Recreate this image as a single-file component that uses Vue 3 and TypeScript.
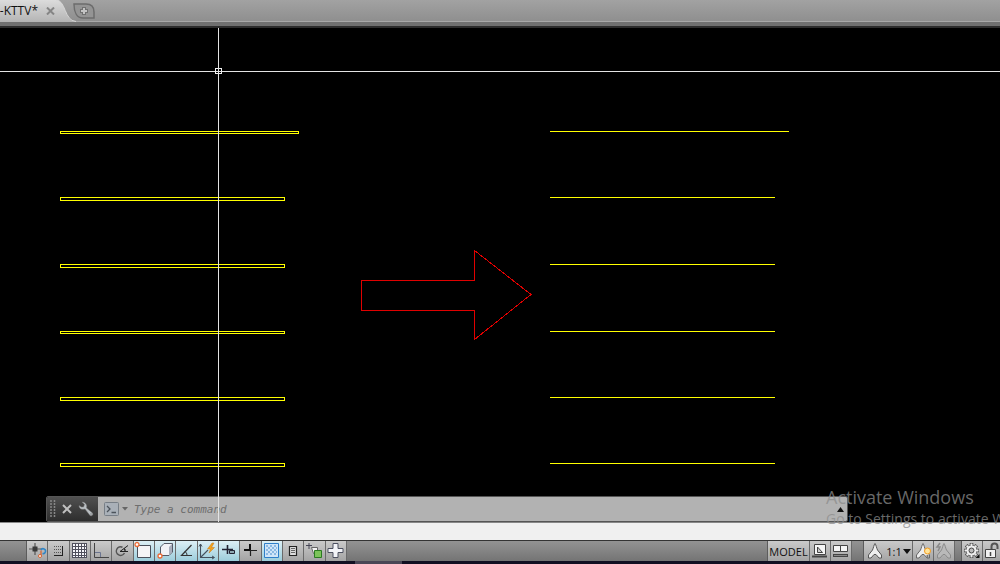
<script setup lang="ts">
import { ref } from 'vue'

interface Shape {
  d: string
  fill?: string
  stroke?: string
  w?: number
}
interface Tool {
  name: string
  on?: boolean
  shapes: Shape[]
}

const command = ref('')

const bars = [
  { y: 131, h: 2, w: 238 },
  { y: 197, h: 3, w: 224 },
  { y: 264, h: 3, w: 224 },
  { y: 331, h: 2, w: 224 },
  { y: 397, h: 3, w: 224 },
  { y: 463, h: 3, w: 224 },
]
const lines = [
  { y: 131, w: 239 },
  { y: 197, w: 225 },
  { y: 264, w: 225 },
  { y: 331, w: 225 },
  { y: 397, w: 225 },
  { y: 463, w: 225 },
]

const tools: Tool[] = [
  {
    name: 'Infer constraints',
    shapes: [
      { d: 'M2 8H15M8 2V14', stroke: '#555', w: 1.2 },
      { d: 'M5.500 5.500h5v5h-5z', fill: '#3a3a3a' },
      { d: 'M14 9a2.400 2.400 0 1 1 1.500 3.500', stroke: '#2f86c8', w: 1.6 },
      { d: 'M14 9.500V15', stroke: '#d8602a', w: 1.2 },
      { d: 'M11.500 15a1.500 1.500 0 1 0 3 0a1.500 1.500 0 1 0-3 0', stroke: '#d8602a', fill: '#fff' },
    ],
  },
  {
    name: 'Snap mode',
    shapes: [
      { d: 'M6 5.500h1m1 0h1m1 0h1m1 0h1M6 8.500h1m1 0h1m1 0h1m1 0h1M6 11.500h1m1 0h1m1 0h1m1 0h1', stroke: '#555' },
      { d: 'M14.500 5v9M6 14.500h9', stroke: '#222' },
    ],
  },
  {
    name: 'Grid display',
    shapes: [
      { d: 'M3 2h15v15H3z', fill: '#f6f6fa' },
      { d: 'M3.500 2v15M6.500 2v15M9.500 2v15M12.500 2v15M15.500 2v15M17.500 2v15M3 2.500h15M3 5.500h15M3 8.500h15M3 11.500h15M3 14.500h15M3 16.500h15', stroke: '#50505c' },
    ],
  },
  {
    name: 'Ortho mode',
    shapes: [
      { d: 'M4 11.500H9.500V16', stroke: '#6b7590' },
      { d: 'M3.500 2V16.500H18', stroke: '#444' },
    ],
  },
  {
    name: 'Polar tracking',
    shapes: [
      { d: 'M10.500 6.200A4.300 4.300 0 1 0 12.500 12', stroke: '#555', w: 1.5 },
      { d: 'M8 10.500L16 4.500M8 10.500H16', stroke: '#222' },
      { d: 'M12 7.500Q13.500 8.500 13 10.500', stroke: '#222', w: 1.4 },
    ],
  },
  {
    name: 'Object snap',
    on: true,
    shapes: [
      { d: 'M4.500 4.500h13v12h-13z', fill: '#f4f4f6', stroke: '#4a4f5a' },
      { d: 'M2 3.500a2 2 0 1 0 4 0a2 2 0 1 0-4 0', fill: '#fff', stroke: '#ee6b35', w: 1.3 },
    ],
  },
  {
    name: '3D object snap',
    on: true,
    shapes: [
      { d: 'M5.500 6L9 2.500H17.500V11L14 14.500H5.500z', fill: '#f1f2f6', stroke: '#555b68' },
      { d: 'M14 6L17 3V11L14 14z', fill: '#a9afbd' },
      { d: 'M3 15a2 2 0 1 0 4 0a2 2 0 1 0-4 0', fill: '#fff', stroke: '#ee6b35', w: 1.3 },
    ],
  },
  {
    name: 'Object snap tracking',
    on: true,
    shapes: [
      { d: 'M15.500 4L5.500 14.500H16', stroke: '#333', w: 1.2 },
      { d: 'M9 10.500Q11 12 11 14', stroke: '#333' },
    ],
  },
  {
    name: 'Dynamic UCS',
    on: true,
    shapes: [
      { d: 'M3.500 3V16.500H17M3.500 16.500L11 9', stroke: '#44505c', w: 1.1 },
      { d: 'M2 5.500L3.500 3L5 5.500M15 15L17.500 16.500L15 18', stroke: '#44505c' },
      { d: 'M15 2L10.500 8H13.500L12 12L17.500 6.500H14.500L17 2z', fill: '#f4a21c', stroke: '#c77a18', w: 0.5 },
    ],
  },
  {
    name: 'Dynamic input',
    on: true,
    shapes: [
      { d: 'M3 8.500H14M8.500 4V13', stroke: '#223', w: 1.6 },
      { d: 'M10.500 9.500h5v3h-5z', fill: '#8fa8b2', stroke: '#223' },
    ],
  },
  {
    name: 'Line weight',
    shapes: [
      { d: 'M4 9H11M10 3V9', stroke: '#111', w: 2 },
      { d: 'M10.500 9V15M10 9.500H17', stroke: '#222', w: 1.2 },
    ],
  },
  {
    name: 'Transparency',
    on: true,
    shapes: [
      { d: 'M3.500 2.500h14v14h-14z', fill: '#cfe5f8', stroke: '#2e7fc9' },
      { d: 'M5 5h2m2 0h2m2 0h2M7 7h2m2 0h2m2 0h1M5 9h2m2 0h2m2 0h2M7 11h2m2 0h2m2 0h1M5 13h2m2 0h2m2 0h2', stroke: '#76aadb', w: 1.6 },
    ],
  },
  {
    name: 'Quick properties',
    shapes: [
      { d: 'M6.500 5.500h7v9h-7z', fill: '#ddd', stroke: '#222', w: 1.2 },
      { d: 'M8 7.500h4M8 9.500h4M8 11.500h4', stroke: '#666' },
    ],
  },
  {
    name: 'Selection cycling',
    shapes: [
      { d: 'M2 4.500H8M5 2V8', stroke: '#445' },
      { d: 'M7.500 6.500H13.500V12.500H9.500z', fill: '#f4f4f4', stroke: '#666' },
      { d: 'M10.500 9.500h7v7h-7z', fill: '#7cc45a', stroke: '#2c7a22' },
    ],
  },
  {
    name: 'Annotation monitor',
    shapes: [
      { d: 'M8 2.500h5v5h5v4h-5v5h-5v-5h-5v-4h5z', fill: '#f3f4f8', stroke: '#4c5060' },
    ],
  },
]

const annot = 'M10 2.500C8.800 4 8.500 7 7.500 9L3.500 14V17H6L9 13.500H11L14 17H16.500V14L12.500 9C11.500 7 11.200 4 10 2.500z'
const teeth = [0, 45, 90, 135, 180, 225, 270, 315]
</script>

<template>
  <div class="app">
    <header class="tabs">
      <div class="strip">
        <svg class="tab-shape" viewBox="0 0 76 22" aria-hidden="true">
          <defs>
            <linearGradient id="tabFill" x1="0" y1="0" x2="0" y2="1">
              <stop offset="0" stop-color="#dcdcdc" />
              <stop offset="1" stop-color="#b4b4b4" />
            </linearGradient>
          </defs>
          <path d="M0 0H56C66 0 64 21 76 22H0z" fill="url(#tabFill)" />
          <path d="M56 0C66 0 64 21 76 21.500" fill="none" stroke="#d8d8d8" />
        </svg>
        <div class="tab">
          <span class="tab-name">3-KTTV*</span>
          <button class="plain close" aria-label="Close drawing">
            <svg width="9" height="8" viewBox="0 0 9 8"><path d="M1 .5L8 7.500M8 .5L1 7.500" stroke="#858585" stroke-width="2" /></svg>
          </button>
        </div>
        <button class="plain new" aria-label="New drawing">
          <svg width="22" height="16" viewBox="0 0 22 16">
            <path d="M1 1H13C18 1 21 4 21 9V15H10C4 15 1 9 1 1z" fill="#949494" stroke="#6c6c6c" stroke-width="1.500" />
            <path d="M7 8H15M11 4V12" stroke="#707070" stroke-width="4" />
            <path d="M8 8H14M11 5V11" stroke="#c4c4c4" stroke-width="2" />
          </svg>
        </button>
      </div>
    </header>

    <main class="canvas">
      <svg class="drawing" aria-label="Drawing area">
        <g transform="translate(0 -28)" fill="none" shape-rendering="crispEdges">
          <g stroke="#ffff00">
            <rect v-for="b in bars" :key="b.y" x="60.500" :y="b.y + 0.5" :width="b.w" :height="b.h" />
            <line v-for="l in lines" :key="l.y" x1="550" :x2="550 + l.w" :y1="l.y + 0.5" :y2="l.y + 0.5" />
          </g>
          <path d="M361.500 280.500H474.500V250.500L531 294.500L474.500 339.500V310.500H361.500z" stroke="#e00000" />
          <path d="M218.500 0V550" stroke="#e4e4e4" />
          <line x1="0" x2="100%" y1="71" y2="71" stroke="#e4e4e4" />
          <rect x="215.500" y="68.500" width="6" height="5" stroke="#f0f0f0" />
        </g>
      </svg>

      <form class="cmd" @submit.prevent>
        <div class="cmd-grip">
          <svg width="6" height="18" viewBox="0 0 6 18" aria-hidden="true">
            <path d="M1 0V18M4.500 0V18" stroke="#888" stroke-width="1.500" stroke-dasharray="2 1" />
          </svg>
          <button type="button" class="plain" aria-label="Close">
            <svg width="10" height="10" viewBox="0 0 10 10"><path d="M1 1L9 9M9 1L1 9" stroke="#c0c0c0" stroke-width="2" /></svg>
          </button>
          <button type="button" class="plain" aria-label="Customize">
            <svg width="16" height="16" viewBox="0 0 16 16">
              <path d="M4 1L6.500 3.500L5.500 6L3.500 6L1 4.500C1 8 4 9 7 8L12 14.500C14 15.500 15.500 13.500 14.500 12L8.500 7C9.500 3.500 7 1 4 1z" fill="#b9bec2" stroke="#777" stroke-width=".5" />
              <path d="M12.500 12.500h1v1h-1z" fill="#555" />
            </svg>
          </button>
        </div>
        <div class="cmd-field">
          <button type="button" class="plain recent" aria-label="Recent commands">
            <svg width="24" height="14" viewBox="0 0 24 14">
              <rect x=".5" y=".5" width="14" height="13" rx="1" fill="#a9b0b8" stroke="#777e86" />
              <path d="M3 4L6 7L3 10M7.500 10.500H12" fill="none" stroke="#4c535b" stroke-width="1.300" />
              <path d="M18 5H24L21 8.500z" fill="#666" />
            </svg>
          </button>
          <input v-model="command" aria-label="Command" placeholder="Type a command" />
          <button type="button" class="plain" aria-label="Command history">
            <svg width="7" height="5" viewBox="0 0 7 5"><path d="M0 5L3.500 0L7 5z" fill="#111" /></svg>
          </button>
        </div>
      </form>
      <div class="cursor-line"></div>
    </main>

    <div class="gap"></div>

    <footer class="status">
      <div class="tools">
        <button v-for="t in tools" :key="t.name" class="cell" :class="{ on: t.on }" :aria-label="t.name">
          <svg width="21" height="20" viewBox="0 0 21 20">
            <path v-for="(s, i) in t.shapes" :key="i" :d="s.d" :fill="s.fill ?? 'none'" :stroke="s.stroke ?? 'none'" :stroke-width="s.w ?? 1" />
          </svg>
        </button>
      </div>
      <div class="right">
        <button class="cell model">MODEL</button>
        <button class="cell icon" aria-label="Layout">
          <svg width="21" height="20" viewBox="0 0 21 20">
            <path d="M4.500 3.500h11v10h-11z" fill="#f5f5f5" stroke="#444" />
            <path d="M7.500 6V11.500H12.500z" fill="#ccc" stroke="#444" />
            <path d="M2 15.500H17" stroke="#444" stroke-width="2" />
          </svg>
        </button>
        <button class="cell icon" aria-label="Quick view drawings">
          <svg width="21" height="20" viewBox="0 0 21 20">
            <path d="M2.500 4.500h7v6h-7zM9.500 4.500h7v6h-7z" fill="#f5f5f5" stroke="#444" />
            <path d="M2 14.500H17" stroke="#444" stroke-width="3" />
            <path d="M3 14.500H16" stroke="#888" />
          </svg>
        </button>
        <span class="divider wide"></span>
        <button class="cell scale" aria-label="Annotation scale 1:1">
          <svg width="20" height="20" viewBox="0 0 20 20"><path :d="annot" fill="#eee" stroke="#555" /></svg>
          <span>1:1</span>
          <svg width="8" height="5" viewBox="0 0 8 5"><path d="M0 0H8L4 5z" fill="#111" /></svg>
        </button>
        <button class="cell icon" aria-label="Annotation visibility">
          <svg width="21" height="20" viewBox="0 0 21 20">
            <path :d="annot" fill="#eee" stroke="#666" />
            <circle cx="14.500" cy="10" r="3" fill="#ffe49a" stroke="#f29a20" />
            <path d="M13.500 14h2v3h-2z" fill="#777" />
          </svg>
        </button>
        <button class="cell icon" aria-label="Add scales automatically">
          <svg width="21" height="20" viewBox="0 0 21 20">
            <path :d="annot" fill="#b9b9b9" stroke="#8a8a8a" />
            <path d="M6 2L3 6H6L4 10" fill="none" stroke="#8a8a8a" stroke-width="1.500" />
          </svg>
        </button>
        <span class="divider"></span>
        <button class="cell icon" aria-label="Workspace switching">
          <svg width="21" height="20" viewBox="0 0 21 20">
            <g stroke="#444" stroke-width="3.600">
              <path v-for="a in teeth" :key="a" d="M9.500 3.500V2" :transform="`rotate(${a} 9.500 9.500)`" />
            </g>
            <circle cx="9.500" cy="9.500" r="5.500" fill="#eee" stroke="#444" />
            <g stroke="#eee" stroke-width="1.800">
              <path v-for="a in teeth" :key="a" d="M9.500 5V2.500" :transform="`rotate(${a} 9.500 9.500)`" />
            </g>
            <circle cx="9.500" cy="9.500" r="2.500" fill="#bbb" stroke="#444" />
            <path d="M17.500 13V17H13.500z" fill="#111" />
          </svg>
        </button>
        <button class="cell lock" aria-label="Toolbar locking">
          <svg width="17" height="20" viewBox="0 0 17 20">
            <path d="M8.500 9V5.500a3 3 0 0 1 6 0V8" fill="none" stroke="#555" stroke-width="2" />
            <path d="M2.500 8.500h10v8h-10z" fill="#f1f1f1" stroke="#444" />
            <path d="M7.500 11v4" stroke="#444" stroke-width="1.500" />
          </svg>
        </button>
      </div>
    </footer>
    <div class="taskbar"><span></span></div>

    <div class="watermark">
      <strong>Activate Windows</strong>
      <span>Go to Settings to activate Windows.</span>
    </div>
  </div>
</template>

<style>
html,
body,
#app {
  height: 100%;
}
body {
  margin: 0;
  background: #000;
}
</style>

<style scoped>
.app {
  position: relative;
  display: flex;
  flex-direction: column;
  min-height: 100%;
  overflow: hidden;
  font-family: 'Open Sans', 'Noto Sans', sans-serif;
  font-size: 11px;
  color: #111;
}
button {
  font: inherit;
  color: inherit;
}
svg {
  display: block;
  flex: none;
}
.plain {
  display: flex;
  align-items: center;
  justify-content: center;
  padding: 0;
  border: 0;
  background: none;
}
.tabs {
  padding-bottom: 4px;
  background: #707070;
  border-bottom: 2px solid #2c2c2c;
}
.strip {
  position: relative;
  display: flex;
  align-items: center;
  height: 21px;
  background: linear-gradient(#a2a2a2, #8f8f8f);
  border-bottom: 1px solid #a8a8a8;
}
.tab-shape {
  position: absolute;
  left: 0;
  top: 0;
  width: 76px;
  height: 22px;
}
.tab {
  position: relative;
  display: flex;
  align-items: center;
  justify-content: flex-end;
  gap: 8px;
  width: 55px;
  margin-right: 18px;
}
.tab-name {
  font-size: 12px;
  line-height: 20px;
  white-space: nowrap;
}
.canvas {
  position: relative;
  flex: 1;
  display: flex;
  background: #000;
  border-bottom: 1px solid #888;
}
.drawing {
  flex: 1;
  width: 100%;
  height: auto;
  min-width: 0;
}
.cmd {
  position: absolute;
  left: 46px;
  right: 152px;
  bottom: 0;
  display: flex;
  height: 26px;
  box-sizing: border-box;
  border: 1px solid #555;
  border-radius: 2px;
  overflow: hidden;
}
.cmd-grip {
  display: flex;
  align-items: center;
  gap: 6px;
  padding: 0 4px 0 3px;
  background: linear-gradient(#505050, #2e2e2e);
}
.cmd-field {
  flex: 1;
  display: flex;
  align-items: center;
  padding: 0 3px 0 6px;
  background: #b2b2b2;
}
.cmd-field input {
  flex: 1;
  min-width: 0;
  margin: 0;
  padding: 0 6px;
  border: 0;
  outline: 0;
  background: none;
  color: #333;
  font: italic 11px 'DejaVu Sans Mono', monospace;
}
.cmd-field input::placeholder {
  color: #6e6e6e;
  opacity: 1;
}
.cursor-line {
  position: absolute;
  left: 218px;
  top: 0;
  bottom: 0;
  width: 1px;
  background: #e4e4e4;
  pointer-events: none;
}
.gap {
  height: 17px;
  background: #f0f0f0;
}
.status {
  display: flex;
  justify-content: space-between;
  height: 20px;
  padding-left: 26px;
  border-top: 1px solid #333;
  background: linear-gradient(#939393, #747474);
}
.tools {
  display: grid;
  grid-template-columns: repeat(15, 1fr);
  width: 320px;
  border-left: 1px solid #5c5c5c;
}
.cell {
  display: flex;
  align-items: center;
  justify-content: center;
  min-width: 0;
  padding: 0;
  border: 0;
  border-right: 1px solid #6a6a6a;
  background: linear-gradient(#cacaca, #a4a4a4);
  overflow: hidden;
}
.cell.on {
  background: linear-gradient(#dceff5, #9ccddb);
}
.right {
  display: flex;
  border-left: 1px solid #5c5c5c;
}
.model {
  width: 42px;
}
.icon {
  width: 21px;
}
.scale {
  width: 49px;
  gap: 1px;
}
.lock {
  width: 17px;
  border-right: 0;
}
.divider {
  width: 7px;
  box-sizing: border-box;
  border-right: 1px solid #5c5c5c;
}
.divider.wide {
  width: 12px;
}
.taskbar {
  height: 3px;
  padding-left: 355px;
  background: #120f22;
}
.taskbar span {
  display: block;
  width: 47px;
  height: 3px;
  background: #4a4656;
}
.watermark {
  position: absolute;
  left: 826px;
  bottom: 35px;
  display: flex;
  flex-direction: column;
  color: rgba(140, 140, 140, 0.75);
  white-space: nowrap;
  pointer-events: none;
}
.watermark strong {
  font-size: 18px;
  line-height: 23px;
  font-weight: 400;
}
.watermark span {
  font-size: 14px;
  line-height: 20px;
}
</style>
